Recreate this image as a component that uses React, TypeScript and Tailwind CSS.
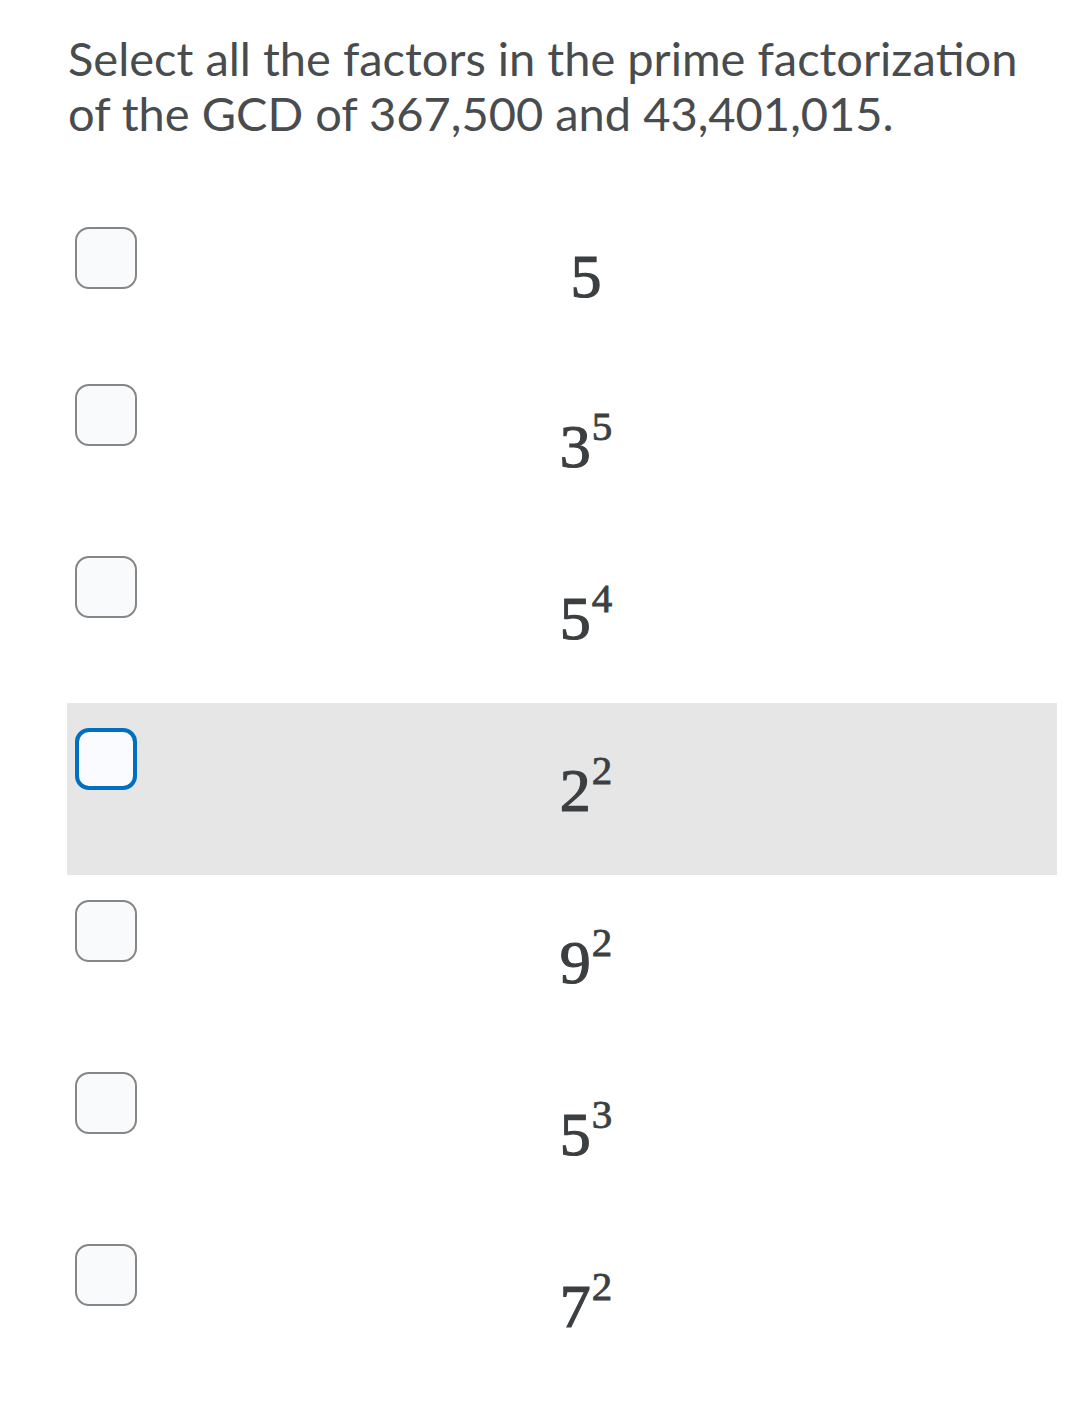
import { useState } from 'react';

type Choice = {
    base: string;
    exp?: string;
};

const choices: Choice[] = [
    { base: '5' },
    { base: '3', exp: '5' },
    { base: '5', exp: '4' },
    { base: '2', exp: '2' },
    { base: '9', exp: '2' },
    { base: '5', exp: '3' },
    { base: '7', exp: '2' },
];

function Checkbox({ focused }: { focused: boolean }) {
    return (
        <div
            className={
                focused
                    ? 'w-[62px] h-[62px] shrink-0 rounded-[14px] border-[4px] border-[#006fbf] bg-[#f9fbff]'
                    : 'w-[62px] h-[62px] shrink-0 rounded-[14px] border-2 border-[#868686] bg-[#f9fafc]'
            }
        />
    );
}

export default function App() {
    const [selected] = useState<number>(3);

    return (
        <div className="min-h-[1401px] bg-white pt-[31px]">
            <h1 className="ml-[68px] mr-[30px] font-['Lato'] text-[47px] leading-[55px] text-[#494c4e]">
                Select all the factors in the prime factorization of the GCD of 367,500 and 43,401,015.
            </h1>

            <div className="ml-[67px] w-[990px] mt-[61px] flex flex-col">
                {choices.map((c, i) => (
                    <div
                        key={i}
                        className={
                            i === selected
                                ? 'flex items-start pl-[8px] pt-[25px] bg-[#e6e6e6]'
                                : 'flex items-start pl-[8px] pt-[25px]'
                        }
                    >
                        <Checkbox focused={i === selected} />
                        <div
                            className={
                                c.exp
                                    ? 'flex-1 flex justify-center pr-[22px] pt-[31px] pb-[54px]'
                                    : 'flex-1 flex justify-center pr-[22px] pt-[18px] pb-[52px]'
                            }
                        >
                            <div className="font-['Liberation_Serif'] text-[62px] leading-none text-[#3c3f41] [-webkit-text-stroke:1.2px_#3c3f41]">
                                {c.base}
                                {c.exp && (
                                    <sup className="text-[41px] leading-none relative top-[-27px] ml-[1px] [-webkit-text-stroke:0.8px_#3c3f41]">
                                        {c.exp}
                                    </sup>
                                )}
                            </div>
                        </div>
                    </div>
                ))}
            </div>
        </div>
    );
}
